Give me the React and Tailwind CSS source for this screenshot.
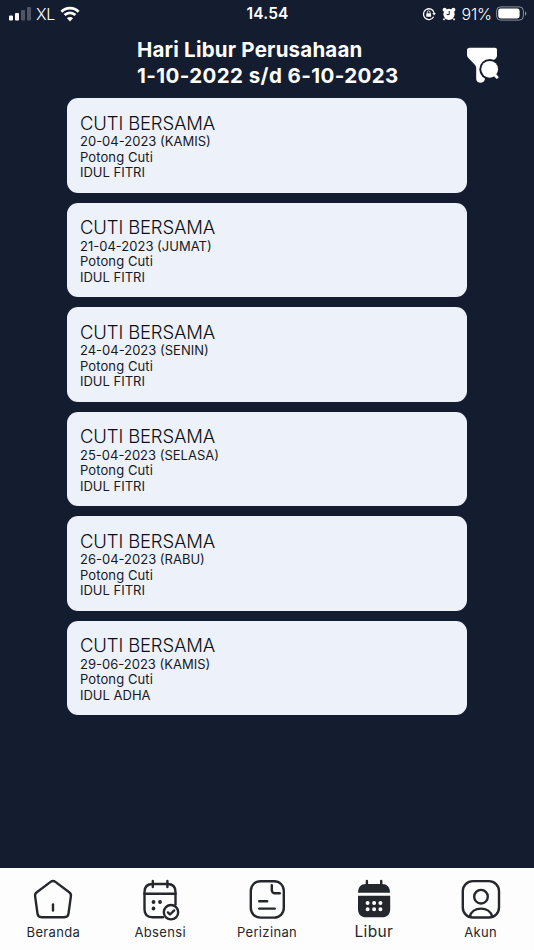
import React from 'react';

const holidays = [
  { title: 'CUTI BERSAMA', date: '20-04-2023 (KAMIS)', type: 'Potong Cuti', name: 'IDUL FITRI' },
  { title: 'CUTI BERSAMA', date: '21-04-2023 (JUMAT)', type: 'Potong Cuti', name: 'IDUL FITRI' },
  { title: 'CUTI BERSAMA', date: '24-04-2023 (SENIN)', type: 'Potong Cuti', name: 'IDUL FITRI' },
  { title: 'CUTI BERSAMA', date: '25-04-2023 (SELASA)', type: 'Potong Cuti', name: 'IDUL FITRI' },
  { title: 'CUTI BERSAMA', date: '26-04-2023 (RABU)', type: 'Potong Cuti', name: 'IDUL FITRI' },
  { title: 'CUTI BERSAMA', date: '29-06-2023 (KAMIS)', type: 'Potong Cuti', name: 'IDUL ADHA' },
];

const NavIcon = ({ children }) => (
  <svg
    className="w-11 h-11"
    viewBox="0 0 44 44"
    fill="none"
    stroke="currentColor"
    strokeWidth="2.4"
    strokeLinecap="round"
    strokeLinejoin="round"
  >
    {children}
  </svg>
);

const HomeIcon = () => (
  <NavIcon>
    <path d="M19.6 4.9a4 4 0 0 1 4.8 0l13.8 10.3a4.2 4.2 0 0 1 1.7 4l-2.4 17.4a4.2 4.2 0 0 1-4.2 3.6H10.7a4.2 4.2 0 0 1-4.2-3.6L4.1 19.2a4.2 4.2 0 0 1 1.7-4Z" />
    <path d="M22 27.5v6" />
  </NavIcon>
);

const AttendanceIcon = () => (
  <NavIcon>
    <path d="M25 40.2H14.5c-5 0-8-2.5-8-8V15c0-5 3-8 8-8h15c5 0 8 3 8 8v12.5" />
    <path d="M14.8 4v6M29.4 4v6M6.5 16.8h31" />
    <path d="M15.5 25h.01M22 25h.01M15.5 31.5h.01" strokeWidth="3.8" />
    <circle cx="33" cy="35.2" r="7.2" />
    <path d="m29.9 35.4 2.1 2.1 4.2-4.1" />
  </NavIcon>
);

const PermitIcon = () => (
  <NavIcon>
    <rect x="5.8" y="4.2" width="33" height="36.4" rx="9.5" />
    <path d="M26.8 8.3v5a3 3 0 0 0 3 3h5M14.2 24.3h8M14.2 31.6h15.6" />
  </NavIcon>
);

const HolidayIcon = () => (
  <NavIcon>
    <path d="M14.9 4v6M29.2 4v6" />
    <path d="M6 15.8C6 9.8 9 7 14 7h16c5 0 8 2.8 8 8.8Z" fill="currentColor" stroke="none" />
    <path d="M6 18.7h32.2V32c0 5.5-3 8.3-8.2 8.3H14c-5 0-8-2.8-8-8.3Z" fill="currentColor" stroke="none" />
    <path d="M15.6 26h.01M22.1 26h.01M28.4 26h.01M15.6 32.3h.01M22.1 32.3h.01M28.4 32.3h.01" stroke="white" strokeWidth="4" />
  </NavIcon>
);

const AccountIcon = () => (
  <NavIcon>
    <rect x="3.8" y="4.1" width="36.2" height="36.4" rx="10" />
    <circle cx="22" cy="19.7" r="6.8" />
    <path d="M10.8 39.6c1.2-4.8 5.7-8 11.2-8s10 3.2 11.2 8" />
  </NavIcon>
);

const navigation = [
  { name: 'Beranda', icon: HomeIcon },
  { name: 'Absensi', icon: AttendanceIcon },
  { name: 'Perizinan', icon: PermitIcon },
  { name: 'Libur', icon: HolidayIcon, active: true },
  { name: 'Akun', icon: AccountIcon },
];

const StatusBar = () => (
  <div className="grid grid-cols-3 items-center h-[27px] pl-2 pr-[7px]">
    <div className="flex items-center">
      <svg className="w-[24px] h-[15px]" viewBox="0 0 24 15" fill="white">
        <rect x="1" y="9.5" width="4" height="5" rx="1" />
        <rect x="7" y="7" width="4" height="7.5" rx="1" />
        <rect x="13" y="4" width="4" height="10.5" rx="1" opacity="0.25" />
        <rect x="19" y="1" width="4" height="13.5" rx="1" opacity="0.25" />
      </svg>
      <span className="ml-1 text-[16px] font-light tracking-[-0.3px]">XL</span>
      <svg className="ml-[5px] w-[20px] h-[16px]" viewBox="0 0 20 16" fill="none" stroke="white" strokeWidth="2.7">
        <path d="M1.4 5.7a12.2 12.2 0 0 1 17.2 0M4.6 9a7.7 7.7 0 0 1 10.8 0" />
        <path d="m10 15.4-3-3.1a4.2 4.2 0 0 1 6 0Z" fill="white" stroke="none" />
      </svg>
    </div>
    <div className="pt-px text-center text-[15.5px] font-semibold tracking-[0.2px]">14.54</div>
    <div className="flex items-center justify-end">
      <svg className="w-[14px] h-[14px]" viewBox="0 0 14 14" fill="none" stroke="white" strokeWidth="1.3">
        <path d="M11.6 9.8a5.4 5.4 0 1 1 .5-4" />
        <path d="M10.3 6h3.5L12 8.6Z" fill="white" stroke="none" />
        <rect x="4.3" y="6.2" width="4.8" height="3.6" rx="0.6" fill="white" stroke="none" />
        <path d="M5.3 6.5V5.3a1.4 1.4 0 0 1 2.8 0v1.2" strokeWidth="0.9" />
      </svg>
      <svg className="ml-[6px] w-[14px] h-[14px]" viewBox="0 0 14 14" fill="white">
        <circle cx="7" cy="7.3" r="5.6" />
        <circle cx="2.6" cy="2.8" r="2" />
        <circle cx="11.4" cy="2.8" r="2" />
        <path d="m2.5 11.5-1 1.6M11.5 11.5l1 1.6" stroke="white" strokeWidth="1.5" />
        <path d="M7.2 4v3.6H4.6" fill="none" stroke="#141d2f" strokeWidth="1" />
      </svg>
      <span className="ml-[5px] text-[16px] font-light tracking-[-0.1px]">91%</span>
      <svg className="ml-[4px] w-[31px] h-[15px]" viewBox="0 0 31 15">
        <rect x="0.6" y="0.9" width="26.8" height="13.2" rx="4" fill="none" stroke="white" strokeOpacity="0.5" />
        <rect x="2.2" y="2.5" width="21.4" height="10" rx="2.4" fill="white" />
        <path d="M29 5.2c1.8.8 1.8 3.8 0 4.6Z" fill="white" fillOpacity="0.5" />
      </svg>
    </div>
  </div>
);

const FilterIcon = () => (
  <svg className="w-[34px] h-[38px]" viewBox="0 0 34 38" fill="white">
    <path d="M3.6 1.7h25.3c1.3 0 2.1.9 2.1 2.1v5.5c0 1.6-.8 3-2.2 4L19 20.5v11.8c0 2.2-1.2 4.4-4.2 4.4-2.6 0-4.6-1.4-4.6-4V22c0-1.4-.6-2.6-1.6-3.6L2.4 12C1.4 11 1 9.9 1 8.6V4.2c0-1.5 1-2.5 2.6-2.5Z" />
    <circle cx="23.7" cy="23.3" r="10.4" fill="#141d2f" />
    <circle cx="23.7" cy="23.3" r="8.4" />
    <path d="m28 28 3 3.2" stroke="white" strokeWidth="3" strokeLinecap="round" />
  </svg>
);

const HolidayCard = ({ holiday }) => (
  <div className="h-[94.5px] rounded-[11px] bg-[#edf1fa] pt-[13.500px] px-[13px] text-[#17191e]">
    <h2 className="text-[18.5px] leading-[22.5px] font-light tracking-[-0.15px] text-[#0e1014]">{holiday.title}</h2>
    <div className="text-[13px] leading-[15.5px] font-normal">
      <p>{holiday.date}</p>
      <p className="tracking-[0.1px]">{holiday.type}</p>
      <p>{holiday.name}</p>
    </div>
  </div>
);

const App = () => {
  return (
    <div className="flex flex-col w-full h-screen overflow-hidden bg-[#141d2f] text-white font-['Inter',sans-serif]">
      <StatusBar />

      {/* Header */}
      <header className="flex items-start justify-between h-[71px] pl-[137px] pr-[34px]">
        <h1 className="pt-[10px] text-[20.5px] leading-[26px] font-bold whitespace-nowrap">
          <span className="block tracking-[0.2px]">Hari Libur Perusahaan</span>
          <span className="block tracking-[0.4px]">1-10-2022 s/d 6-10-2023</span>
        </h1>
        <div className="pt-[19px]">
          <FilterIcon />
        </div>
      </header>

      {/* Holiday list */}
      <main className="flex-1 flex flex-col gap-[10px] px-[67px]">
        {holidays.map((holiday) => (
          <HolidayCard key={holiday.date} holiday={holiday} />
        ))}
      </main>

      {/* Bottom navigation */}
      <nav className="grid grid-cols-5 h-[82px] pt-[9px] bg-[#fdfdfe] text-[#24272c]">
        {navigation.map((item) => {
          const Icon = item.icon;
          return (
            <div key={item.name} className="flex flex-col items-center">
              <Icon />
              <span
                className={
                  item.active
                    ? 'mt-px text-[15.5px] leading-[20px] tracking-[0.3px]'
                    : 'mt-[2px] text-[13px] leading-[18px] tracking-[0.35px]'
                }
              >
                {item.name}
              </span>
            </div>
          );
        })}
      </nav>
    </div>
  );
};

export default App;
